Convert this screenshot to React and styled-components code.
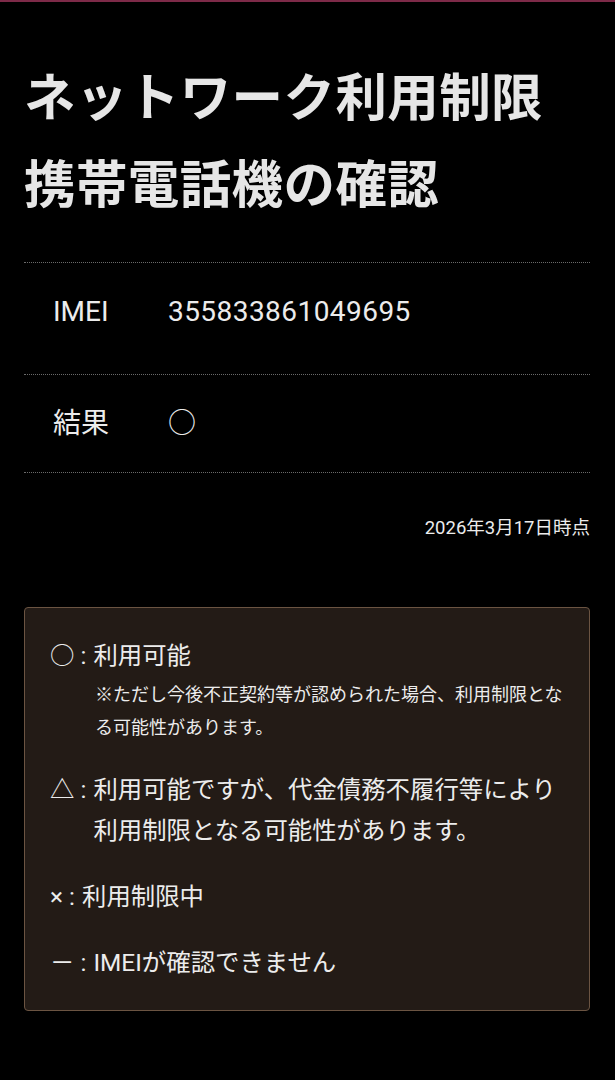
import React from 'react'
import styled, { createGlobalStyle } from 'styled-components'

const GlobalStyle = createGlobalStyle`
  html, body {
    margin: 0;
    padding: 0;
    background: #000;
  }
  body {
    font-family: Roboto, "Noto Sans CJK JP", sans-serif;
    color: #ececec;
  }
`

//Page data
const rows = [
  { label: 'IMEI', value: '355833861049695', extra: true },
  { label: '結果', value: '○' },
]

const legend = [
  { mark: '○', text: '利用可能', note: '※ただし今後不正契約等が認められた場合、利用制限となる可能性があります。' },
  { mark: '△', text: '利用可能ですが、代金債務不履行等により利用制限となる可能性があります。' },
  { mark: '×', text: '利用制限中' },
  { mark: '－', text: 'IMEIが確認できません' },
]

const App = () => {
  return <Page>
    <GlobalStyle />
    {/* Heading */}
    <Title>ネットワーク利用制限<br />携帯電話機の確認</Title>
    {/* Result table */}
    <Table>
      {rows.map((row) => (
        <Row key={row.label} $extra={row.extra}>
          <Label>{row.label}</Label>
          <Value>{row.value}</Value>
        </Row>
      ))}
    </Table>
    <Stamp>2026年3月17日時点</Stamp>
    {/* Legend box */}
    <Legend>
      {legend.map((item) => (
        <Item key={item.mark}>
          <Line>
            <Mark>{item.mark} : </Mark>
            <Text>{item.text}</Text>
          </Line>
          {item.note && <Note>{item.note}</Note>}
        </Item>
      ))}
    </Legend>
  </Page>
}

//Component style
const Page = styled.main`
  min-height: 1080px;
  box-sizing: border-box;
  border-top: 2px solid #7d2a48;
  padding: 48px 25px 40px 24px;
`

const Title = styled.h1`
  margin: 0;
  font-family: "Noto Sans CJK JP", sans-serif;
  font-size: 51.5px;
  font-weight: 700;
  line-height: 87px;
  color: #e6e6e6;
  letter-spacing: 0.4px;
`

const Table = styled.div`
  margin-top: 38px;
  border-bottom: 1px dotted #6a6a6a;
`

const Row = styled.div`
  display: flex;
  align-items: center;
  border-top: 1px dotted #6a6a6a;
  padding: 25px 0 ${(p) => (p.$extra ? '39px' : '25px')} 29px;
  font-size: 28px;
  line-height: 47px;
`

const Label = styled.div`
  width: 115px;
  flex-shrink: 0;
`

const Value = styled.div`
  flex: 1;
  letter-spacing: 0.45px;
`

const Stamp = styled.p`
  margin: 40px 0 0;
  text-align: right;
  font-size: 18.5px;
  line-height: 30px;
`

const Legend = styled.section`
  margin-top: 64px;
  background: #231b16;
  border: 1px solid #6b5442;
  border-radius: 4px;
  padding: 27px 24px 27px 25px;
  display: flex;
  flex-direction: column;
  gap: 25px;
`

const Item = styled.div`
  display: flex;
  flex-direction: column;
  gap: 2px;
`

const Line = styled.div`
  display: flex;
  font-size: 24.4px;
  line-height: 41px;
`

const Mark = styled.span`
  white-space: pre;
  flex-shrink: 0;
  margin-right: 1px;
`

const Text = styled.span`
  flex: 1;
`

const Note = styled.p`
  margin: 0;
  padding-left: 45px;
  font-size: 18px;
  line-height: 33px;
`

export default App
